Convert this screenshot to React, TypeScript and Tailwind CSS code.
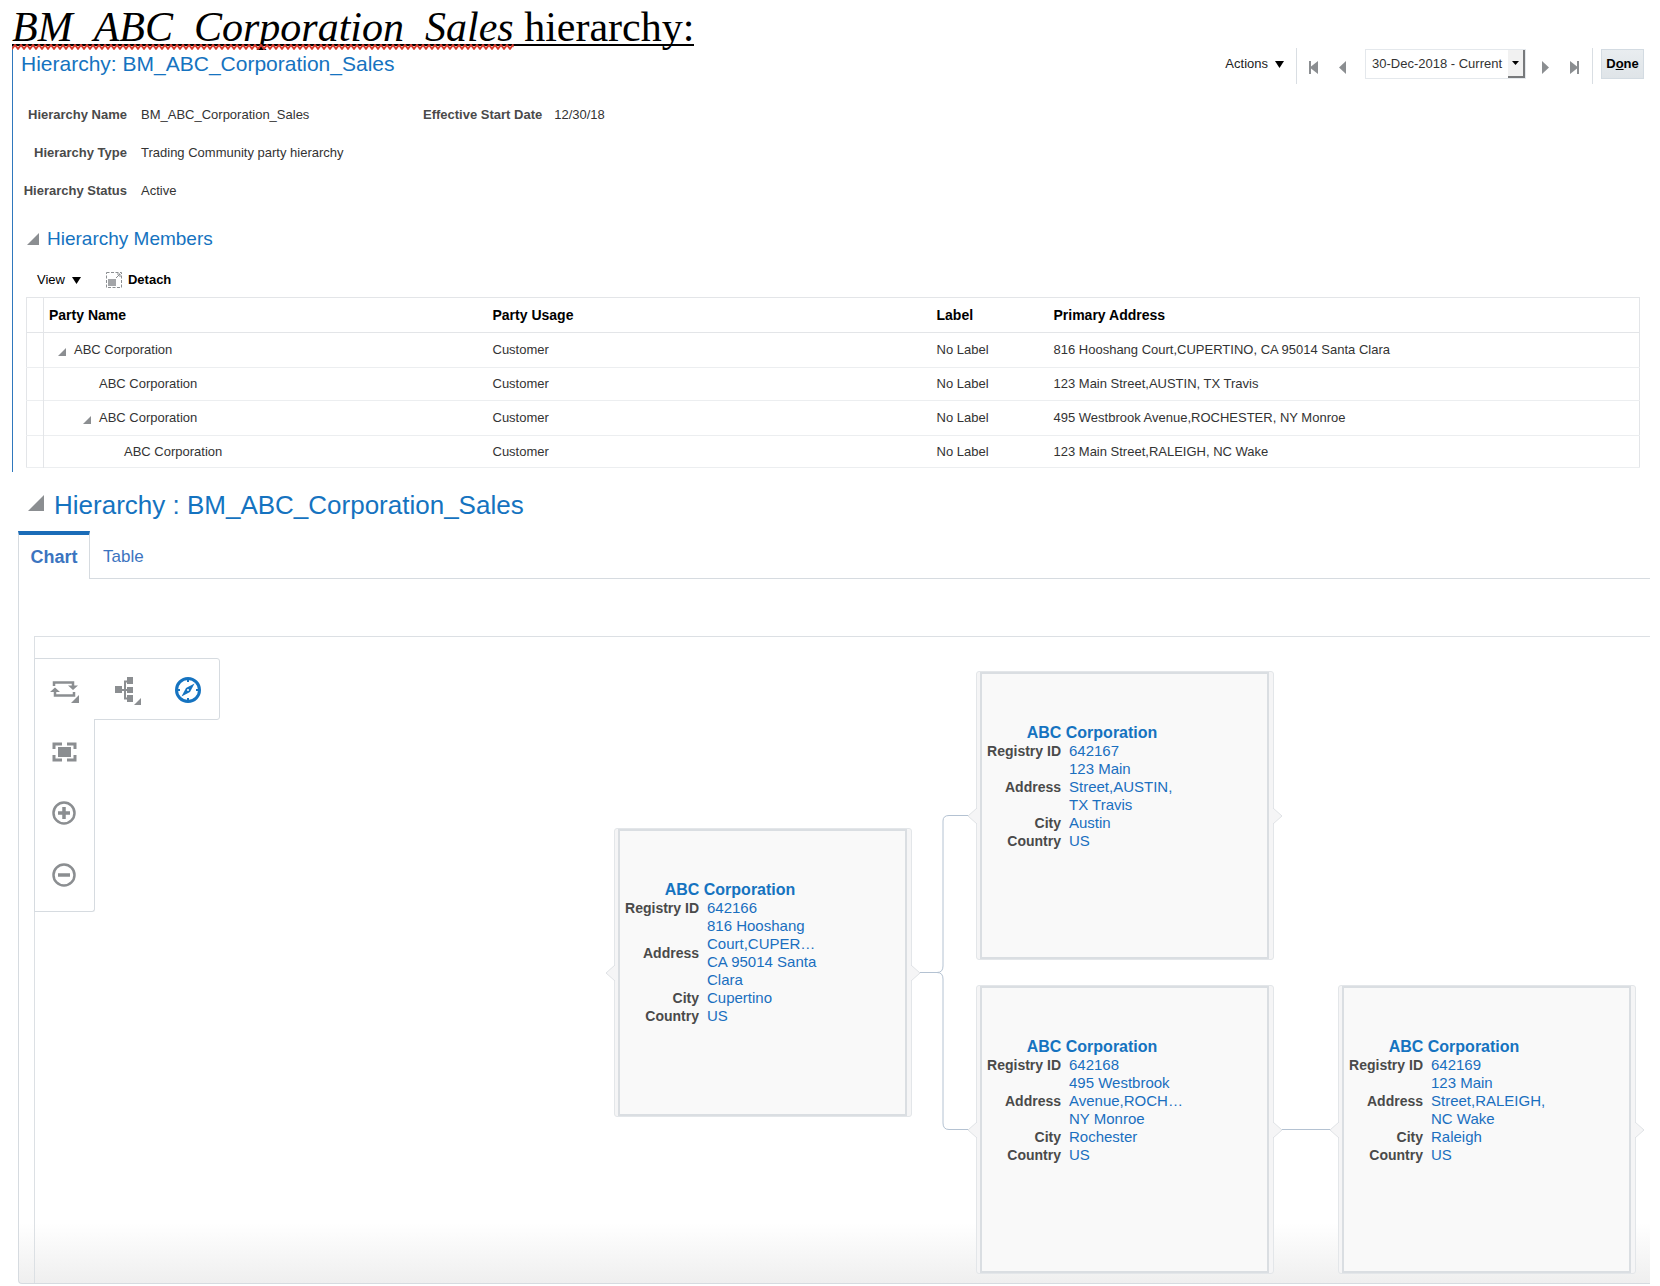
import type { ReactNode } from "react";

interface HierarchyNode {
  id: string;
  x: number;
  y: number;
  address: string[];
  city: string;
}

const FIELDS = [
  { label: "Hierarchy Name", value: "BM_ABC_Corporation_Sales" },
  { label: "Hierarchy Type", value: "Trading Community party hierarchy" },
  { label: "Hierarchy Status", value: "Active" },
];

const MEMBERS = [
  { indent: "pl-[14px]", parent: true, height: "h-[35px]", address: "816 Hooshang Court,CUPERTINO, CA 95014 Santa Clara" },
  { indent: "pl-[39px]", parent: false, height: "h-[33px]", address: "123 Main Street,AUSTIN, TX Travis" },
  { indent: "pl-[39px]", parent: true, height: "h-[35px]", address: "495 Westbrook Avenue,ROCHESTER, NY Monroe" },
  { indent: "pl-[64px]", parent: false, height: "h-[32px]", address: "123 Main Street,RALEIGH, NC Wake" },
];

// positions on the chart canvas
const NODES: HierarchyNode[] = [
  { id: "642166", x: 579, y: 191, address: ["816 Hooshang", "Court,CUPER…", "CA 95014 Santa", "Clara"], city: "Cupertino" },
  { id: "642167", x: 941, y: 34, address: ["123 Main", "Street,AUSTIN,", "TX Travis"], city: "Austin" },
  { id: "642168", x: 941, y: 348, address: ["495 Westbrook", "Avenue,ROCH…", "NY Monroe"], city: "Rochester" },
  { id: "642169", x: 1303, y: 348, address: ["123 Main", "Street,RALEIGH,", "NC Wake"], city: "Raleigh" },
];

function Disclosure({ className }: { className: string }) {
  return (
    <svg viewBox="0 0 10 10" preserveAspectRatio="none" className={`fill-[#8b8e91] ${className}`}>
      <path d="M10 0V10H0Z" />
    </svg>
  );
}

function Caret({ className }: { className: string }) {
  return (
    <svg viewBox="0 0 10 8" preserveAspectRatio="none" className={className}>
      <path d="M0 0H10L5 8Z" />
    </svg>
  );
}

function NavButton({ label, d }: { label: string; d: string }) {
  return (
    <button aria-label={label} className="flex w-[29px] justify-center pt-[3px]">
      <svg width="10" height="13" viewBox="0 0 10 13" fill="#8b8e91">
        <path d={d} />
      </svg>
    </button>
  );
}

function ToolButton({ label, children }: { label: string; children: ReactNode }) {
  return (
    <button aria-label={label} className="flex h-[62px] w-[58px] items-center justify-center">
      <svg width="30" height="30" viewBox="0 0 30 30" fill="none">
        {children}
      </svg>
    </button>
  );
}

function NodeCard({ node }: { node: HierarchyNode }) {
  return (
    <div className="absolute h-[289px] w-[298px] rounded-[3px] border border-[#e3e6e9] bg-[#f5f5f6] pr-1 pl-[3px]" style={{ left: node.x, top: node.y }}>
      <svg className="absolute top-[135px] -left-[10px]" width="10" height="18" viewBox="0 0 10 18" fill="#f5f5f6" stroke="#dfe2e5">
        <path d="M10 1L1 9L10 17" />
      </svg>
      <svg className="absolute top-[135px] -right-[10px]" width="10" height="18" viewBox="0 0 10 18" fill="#f5f5f6" stroke="#dfe2e5">
        <path d="M0 1L9 9L0 17" />
      </svg>
      <div className="h-full border-2 border-[#dadee2] bg-[#f9f9f9] pt-[49px]">
        <a href="#" className="block w-[220px] text-center text-base leading-[19px] font-bold text-[#1573c0]">ABC Corporation</a>
        <dl className="grid grid-cols-[79px_1fr] items-center gap-x-2 text-[15px] leading-[18px] text-[#1a6fbf]">
          <NodeField label="Registry ID">{node.id}</NodeField>
          <NodeField label="Address">
            {node.address.map((line) => (
              <span key={line} className="block">{line}</span>
            ))}
          </NodeField>
          <NodeField label="City">{node.city}</NodeField>
          <NodeField label="Country">US</NodeField>
        </dl>
      </div>
    </div>
  );
}

function NodeField({ label, children }: { label: string; children: ReactNode }) {
  return (
    <>
      <dt className="text-right text-sm leading-[18px] font-bold whitespace-nowrap text-[#4a4a4a]">{label}</dt>
      <dd>{children}</dd>
    </>
  );
}

function Toolbar() {
  return (
    <div className="absolute top-[21px] -left-px">
      <div className="flex h-[62px] w-[186px] gap-1 rounded-r-[3px] border border-[#d6dbe0] bg-white">
        <ToolButton label="Change orientation">
          <path d="M5 11V7.500H24V11M25 17V20.500H6V17" stroke="#8b8e91" strokeWidth="2.500" />
          <path d="M19 10.500H29L24 15ZM1 17H11L6 12.500Z" fill="#8b8e91" />
          <path d="M30 20V28H22Z" fill="#8b8e91" />
        </ToolButton>
        <ToolButton label="Layout">
          <path d="M8 15H16M20 6.500H14V23.500H20M14 15H20" stroke="#8b8e91" strokeWidth="2" />
          <path d="M4 11H11V18H4ZM16 2H22V9H16ZM16 12H22V18H16ZM16 20H22V27H16Z" fill="#8b8e91" />
          <path d="M30 23V30H23Z" fill="#8b8e91" />
        </ToolButton>
        <ToolButton label="Navigator">
          <circle cx="15" cy="15" r="11.500" stroke="#1573c0" strokeWidth="3" />
          <path d="M15 4V7M15 23V26M4 15H7M23 15H26" stroke="#1573c0" strokeWidth="2" />
          <path d="M21.500 8.500L17 17L8.500 21.500L13 13Z" fill="#1573c0" />
          <circle cx="15" cy="15" r="1" fill="#fff" />
        </ToolButton>
      </div>
      {/* overlaps the bottom edge of the horizontal strip */}
      <div className="-mt-px flex h-[193px] w-[61px] flex-col rounded-br-[3px] border border-t-0 border-[#d6dbe0] bg-white pt-px">
        <ToolButton label="Zoom to fit">
          <path d="M5 13V8H13M18 8H26V13M26 19V24H18M13 24H5V19" stroke="#8b8e91" strokeWidth="3" />
          <path d="M9 11H22V21H9Z" fill="#8b8e91" />
        </ToolButton>
        <ToolButton label="Zoom in">
          <circle cx="15" cy="15" r="10.500" stroke="#8b8e91" strokeWidth="2.500" />
          <path d="M9 15H21M15 9V21" stroke="#8b8e91" strokeWidth="3.500" />
        </ToolButton>
        <ToolButton label="Zoom out">
          <circle cx="15" cy="15" r="10.500" stroke="#8b8e91" strokeWidth="2.500" />
          <path d="M9 15H21" stroke="#8b8e91" strokeWidth="3.500" />
        </ToolButton>
      </div>
    </div>
  );
}

function HierarchyDetails() {
  return (
    <section className="ml-3 border-l border-[#2f78bd] pr-4 pb-1 text-[13px] leading-4 text-[#333]">
      <header className="flex items-start pt-0.5">
        <h2 className="pt-1 pl-2 text-[21px] leading-6 text-[#1573c0]">Hierarchy: BM_ABC_Corporation_Sales</h2>
        <div className="ml-auto flex h-9 items-start">
          <button className="flex h-8 items-center gap-[7px] pr-3 text-[#222]">
            Actions
            <Caret className="h-[7px] w-[9px] fill-black" />
          </button>
          <div className="flex h-9 items-center border-x border-[#d9dee3] pr-1 pl-[2px]">
            <NavButton label="First" d="M0 0H2V5.500L9 0V13L2 7.500V13H0Z" />
            <NavButton label="Previous" d="M8 0V13L1 6.500Z" />
            <div className="relative mb-1 ml-2 h-[30px] w-[161px] border border-[#e4e8ec] bg-white">
              <select aria-label="Effective date" className="h-full w-full appearance-none pl-[6px] text-[13px] text-[#333]">
                <option>30-Dec-2018 - Current</option>
              </select>
              <span className="pointer-events-none absolute top-0 right-0 flex h-7 w-[17px] items-center justify-center border-r-2 border-b-2 border-[#77797b] bg-[#f1f1f1]">
                <Caret className="h-1 w-[7px] fill-black" />
              </span>
            </div>
            <div className="ml-1 flex">
              <NavButton label="Next" d="M2 0L9 6.500L2 13Z" />
              <NavButton label="Last" d="M1 0L8 5.500V0H10V13H8V7.500L1 13Z" />
            </div>
          </div>
          <button className="mt-px ml-2 h-[30px] w-[43px] border border-[#d3dbe2] bg-gradient-to-b from-[#e9edf0] to-[#dfe4e8] font-bold text-black">
            D<span className="underline">o</span>ne
          </button>
        </div>
      </header>

      <div className="mt-[23px] flex items-start">
        <dl className="grid w-[410px] grid-cols-[114px_1fr] gap-x-[14px] gap-y-[22px]">
          {FIELDS.map((f) => (
            <div key={f.label} className="contents">
              <dt className="text-right font-bold whitespace-nowrap text-[#4a4a4a]">{f.label}</dt>
              <dd>{f.value}</dd>
            </div>
          ))}
        </dl>
        <dl className="flex gap-3">
          <dt className="font-bold text-[#4a4a4a]">Effective Start Date</dt>
          <dd>12/30/18</dd>
        </dl>
      </div>

      <h3 className="mt-7 flex items-center gap-2 pl-[14px] text-[19px] leading-6 text-[#1573c0]">
        <Disclosure className="h-3 w-3" />
        Hierarchy Members
      </h3>
      <div className="mt-[21px] flex items-center pl-6 text-black">
        <button className="flex items-center gap-[7px]">
          View
          <Caret className="h-[7px] w-[9px] fill-black" />
        </button>
        <button className="ml-[25px] flex items-center gap-[6px] font-bold">
          <svg width="16" height="16" viewBox="0 0 16 16">
            <path d="M.5.500H15.500V15.500H.5Z" fill="none" stroke="#8b8e91" strokeDasharray="3 1.500" />
            <path d="M2 7H10V14H2Z" fill="#a3a5a8" />
            <path d="M10 6L14 2M11 2H14V5" fill="none" stroke="#8b8e91" />
          </svg>
          Detach
        </button>
      </div>

      <div className="mt-[9px] mr-1 ml-[13px]">
        <table className="w-full table-fixed border border-[#e3e5e8] text-left">
          <colgroup>
            <col className="w-[17px]" />
            <col className="w-[444px]" />
            <col className="w-[444px]" />
            <col className="w-[117px]" />
            <col />
          </colgroup>
          <thead>
            <tr className="h-[35px] border-b border-[#e3e5e8] text-sm text-black">
              <td className="border-r border-[#e3e5e8]" />
              <th className="pl-[5px]">Party Name</th>
              <th className="pl-[5px]">Party Usage</th>
              <th className="pl-[5px]">Label</th>
              <th className="pl-[5px]">Primary Address</th>
            </tr>
          </thead>
          <tbody>
            {MEMBERS.map((m) => (
              <tr key={m.address} className={`border-b border-[#eceef0] ${m.height}`}>
                <td className="border-r border-[#e3e5e8]" />
                <td className={m.indent}>
                  <div className="flex items-center gap-2">
                    {m.parent ? <Disclosure className="mt-[3px] h-2 w-2" /> : <span className="w-2" />}
                    ABC Corporation
                  </div>
                </td>
                <td className="pl-[5px]">Customer</td>
                <td className="pl-[5px]">No Label</td>
                <td className="pl-[5px]">{m.address}</td>
              </tr>
            ))}
          </tbody>
        </table>
      </div>
    </section>
  );
}

function HierarchyChart() {
  return (
    <section className="mt-[17px] mr-[10px] ml-[18px]">
      <h2 className="flex items-center gap-[10px] pl-[10px] text-[26px] leading-8 text-[#1573c0]">
        <Disclosure className="mb-[5px] h-4 w-4" />
        Hierarchy : BM_ABC_Corporation_Sales
      </h2>
      <div role="tablist" className="mt-[10px] flex h-12 border-b border-[#d6dbe0] text-[#3b74c0]">
        <button role="tab" aria-selected="true" className="-mb-px w-[72px] border-x border-t-4 border-[#d6dbe0] border-t-[#1a6cb8] bg-white text-lg font-bold">
          Chart
        </button>
        <button role="tab" aria-selected="false" className="px-[13px] pt-1 text-[17px]">Table</button>
      </div>
      <div className="rounded-bl-[4px] border-b border-l border-[#d6dbe0] bg-gradient-to-t from-[#efefef] to-white to-[60px] pt-[57px] pl-[15px]">
        <div className="relative h-[647px] border-t border-l border-[#dce0e4]">
          <Toolbar />
          <svg className="absolute top-0 left-0" width="1400" height="646" fill="none" stroke="#b4c2d2">
            <path d="M885 335.500H902Q908 335.500 908 329V184Q908 178.500 914 178.500H933M902 335.500Q908 335.500 908 342V486Q908 492.500 914 492.500H933M1247 492.500H1295" />
          </svg>
          {NODES.map((n) => (
            <NodeCard key={n.id} node={n} />
          ))}
        </div>
      </div>
    </section>
  );
}

export default function App() {
  return (
    <main className="overflow-x-hidden bg-white font-['Liberation_Sans',Arial,sans-serif]">
      <h1 className="relative ml-3 inline-block h-[46px] border-b-2 border-black align-top font-['Liberation_Serif','Times_New_Roman',serif] text-[42px] leading-[54px] whitespace-nowrap text-black">
        <span className="relative">
          <em>BM_ABC_Corporation_Sales</em>
          <svg className="absolute bottom-0 left-0 h-[6px] w-full">
            <defs>
              <pattern id="squiggle" width="6" height="6" patternUnits="userSpaceOnUse">
                <path d="M-1 6L3 1L7 6" fill="none" stroke="#d8392b" strokeWidth="2" />
              </pattern>
            </defs>
            <rect width="100%" height="6" fill="url(#squiggle)" />
          </svg>
        </span>{" "}
        hierarchy:
      </h1>
      <HierarchyDetails />
      <HierarchyChart />
    </main>
  );
}
